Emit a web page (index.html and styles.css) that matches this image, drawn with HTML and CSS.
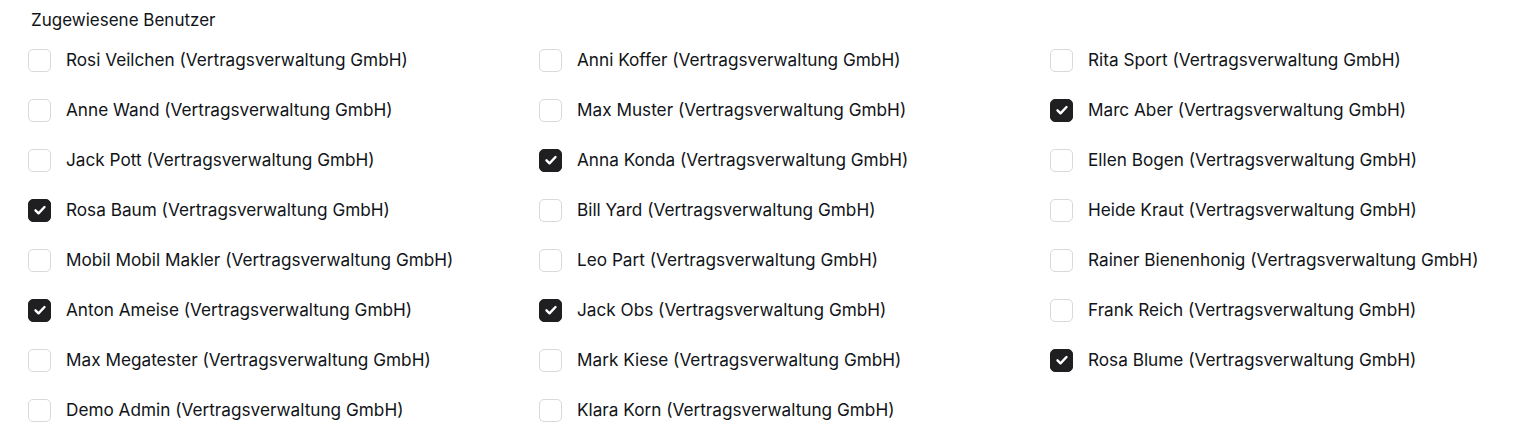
FILE: index.html
```html
<!DOCTYPE html>
<html lang="de">
<head>
<meta charset="utf-8">
<link rel="stylesheet" href="styles.css">
</head>
<body>
<div class="field">
  <div class="label">Zugewiesene Benutzer</div>
  <div class="grid">
    <label class="opt"><span class="box"></span><span class="txt">Rosi Veilchen (Vertragsverwaltung GmbH)</span></label>
    <label class="opt"><span class="box"></span><span class="txt">Anni Koffer (Vertragsverwaltung GmbH)</span></label>
    <label class="opt"><span class="box"></span><span class="txt">Rita Sport (Vertragsverwaltung GmbH)</span></label>

    <label class="opt"><span class="box"></span><span class="txt">Anne Wand (Vertragsverwaltung GmbH)</span></label>
    <label class="opt"><span class="box"></span><span class="txt">Max Muster (Vertragsverwaltung GmbH)</span></label>
    <label class="opt"><span class="box on"><svg viewBox="0 0 20 20"><path d="M5.5 10.3l3 3 6-6.3"/></svg></span><span class="txt">Marc Aber (Vertragsverwaltung GmbH)</span></label>

    <label class="opt"><span class="box"></span><span class="txt">Jack Pott (Vertragsverwaltung GmbH)</span></label>
    <label class="opt"><span class="box on"><svg viewBox="0 0 20 20"><path d="M5.5 10.3l3 3 6-6.3"/></svg></span><span class="txt">Anna Konda (Vertragsverwaltung GmbH)</span></label>
    <label class="opt"><span class="box"></span><span class="txt">Ellen Bogen (Vertragsverwaltung GmbH)</span></label>

    <label class="opt"><span class="box on"><svg viewBox="0 0 20 20"><path d="M5.5 10.3l3 3 6-6.3"/></svg></span><span class="txt">Rosa Baum (Vertragsverwaltung GmbH)</span></label>
    <label class="opt"><span class="box"></span><span class="txt">Bill Yard (Vertragsverwaltung GmbH)</span></label>
    <label class="opt"><span class="box"></span><span class="txt">Heide Kraut (Vertragsverwaltung GmbH)</span></label>

    <label class="opt"><span class="box"></span><span class="txt">Mobil Mobil Makler (Vertragsverwaltung GmbH)</span></label>
    <label class="opt"><span class="box"></span><span class="txt">Leo Part (Vertragsverwaltung GmbH)</span></label>
    <label class="opt"><span class="box"></span><span class="txt">Rainer Bienenhonig (Vertragsverwaltung GmbH)</span></label>

    <label class="opt"><span class="box on"><svg viewBox="0 0 20 20"><path d="M5.5 10.3l3 3 6-6.3"/></svg></span><span class="txt">Anton Ameise (Vertragsverwaltung GmbH)</span></label>
    <label class="opt"><span class="box on"><svg viewBox="0 0 20 20"><path d="M5.5 10.3l3 3 6-6.3"/></svg></span><span class="txt">Jack Obs (Vertragsverwaltung GmbH)</span></label>
    <label class="opt"><span class="box"></span><span class="txt">Frank Reich (Vertragsverwaltung GmbH)</span></label>

    <label class="opt"><span class="box"></span><span class="txt">Max Megatester (Vertragsverwaltung GmbH)</span></label>
    <label class="opt"><span class="box"></span><span class="txt">Mark Kiese (Vertragsverwaltung GmbH)</span></label>
    <label class="opt"><span class="box on"><svg viewBox="0 0 20 20"><path d="M5.5 10.3l3 3 6-6.3"/></svg></span><span class="txt">Rosa Blume (Vertragsverwaltung GmbH)</span></label>

    <label class="opt"><span class="box"></span><span class="txt">Demo Admin (Vertragsverwaltung GmbH)</span></label>
    <label class="opt"><span class="box"></span><span class="txt">Klara Korn (Vertragsverwaltung GmbH)</span></label>
  </div>
</div>
</body>
</html>
```

FILE: styles.css
```css
html, body {
  margin: 0;
  padding: 0;
  background: #ffffff;
}
body {
  font-family: Inter, "Noto Sans", "Liberation Sans", sans-serif;
  color: #111418;
}
.field {
  padding: 9px 0 0 28px;
}
.label {
  font-size: 17px;
  line-height: 22px;
  margin-left: 3px;
  margin-bottom: 18px;
}
.grid {
  display: grid;
  grid-template-columns: repeat(3, 511px);
  grid-auto-rows: 50px;
}
.opt {
  display: flex;
  align-items: center;
  height: 22px;
  gap: 15px;
  font-size: 17.2px;
  line-height: 22px;
  cursor: pointer;
}
.box {
  flex: none;
  width: 23px;
  height: 23px;
  box-sizing: border-box;
  border: 1px solid #d9d9d9;
  border-radius: 5px;
  background: #fff;
  display: flex;
  align-items: center;
  justify-content: center;
}
.box.on {
  background: #1f1f22;
  border-color: #1f1f22;
}
.box svg {
  width: 20px;
  height: 20px;
  fill: none;
  stroke: #fff;
  stroke-width: 2.4;
  stroke-linecap: round;
  stroke-linejoin: round;
}
.txt {
  white-space: nowrap;
}
```
